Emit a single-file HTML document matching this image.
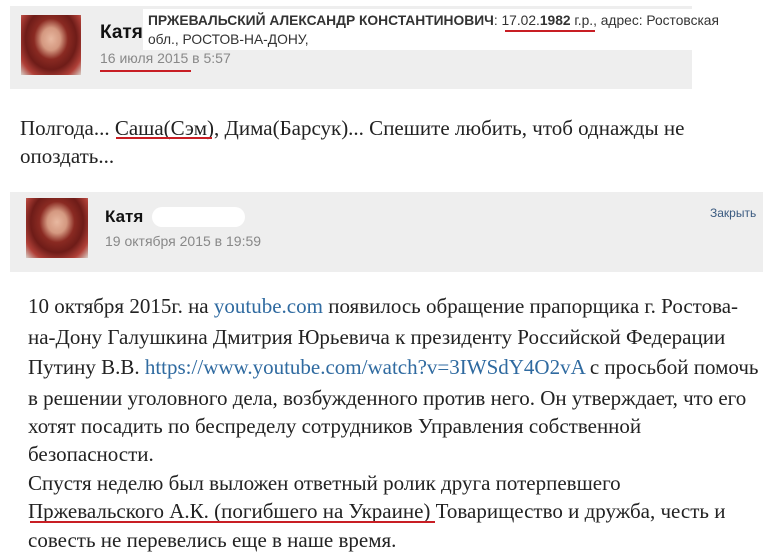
<!DOCTYPE html>
<html><head><meta charset="utf-8"><style>
body{margin:0;width:763px;height:559px;background:#fff;position:relative;overflow:hidden;font-family:"Liberation Sans",sans-serif}
.a{position:absolute}
.grey{background:#eeeeee}
.av{background:radial-gradient(ellipse at 50% 40%,#e8b8a0 0,#d49880 22%,#8a2a22 40%,#6e1c18 60%,#b04038 80%,#d8d0c8 100%)}
.ser{font-family:"Liberation Serif",serif;font-size:21px;color:#222;white-space:nowrap;position:absolute;left:28px;line-height:24px}
.red{position:absolute;height:2px;background:#c81e24}
a{color:#2f6aa0;text-decoration:none}
</style></head><body>
<div class="a grey" style="left:10px;top:6px;width:682px;height:83px"></div>
<div class="a av" style="left:21px;top:15px;width:60px;height:60px"></div>
<div class="a" style="left:100px;top:22px;font-size:19px;font-weight:bold;color:#111">Катя</div>
<div class="a" style="left:100px;top:50px;font-size:14px;color:#888">16 июля 2015 в 5:57</div>
<div class="red" style="left:100px;top:70px;width:91px"></div>
<div class="a" style="left:143px;top:9px;width:595px;height:41px;background:#fff"></div>
<div class="a" style="left:148px;top:11px;font-size:13.8px;color:#333;line-height:19px;width:590px;white-space:nowrap">
<b>ПРЖЕВАЛЬСКИЙ АЛЕКСАНДР КОНСТАНТИНОВИЧ</b>: 17.02.<b>1982</b> г.р., адрес: Ростовская<br>обл., РОСТОВ-НА-ДОНУ,</div>
<div class="red" style="left:505px;top:30px;width:90px"></div>

<div class="ser" style="left:20px;top:116px">Полгода... Саша(Сэм), Дима(Барсук)... Спешите любить, чтоб однажды не</div>
<div class="ser" style="left:20px;top:144px">опоздать...</div>
<div class="red" style="left:116px;top:137px;width:96px"></div>

<div class="a grey" style="left:10px;top:192px;width:753px;height:80px"></div>
<div class="a av" style="left:26px;top:198px;width:62px;height:60px"></div>
<div class="a" style="left:105px;top:207px;font-size:17px;font-weight:bold;color:#111">Катя</div>
<div class="a" style="left:152px;top:207px;width:93px;height:20px;border-radius:10px;background:#fff"></div>
<div class="a" style="left:105px;top:233px;font-size:14px;color:#888">19 октября 2015 в 19:59</div>
<div class="a" style="left:710px;top:206px;font-size:12px;color:#3a5a80">Закрыть</div>

<div class="ser" style="top:294px">10 октября 2015г. на <a>youtube.com</a> появилось обращение прапорщика г. Ростова-</div>
<div class="ser" style="top:325px">на-Дону Галушкина Дмитрия Юрьевича к президенту Российской Федерации</div>
<div class="ser" style="top:355px">Путину В.В. <a>https://www.youtube.com/watch?v=3IWSdY4O2vA</a> с просьбой помочь</div>
<div class="ser" style="top:386px">в решении уголовного дела, возбужденного против него. Он утверждает, что его</div>
<div class="ser" style="top:414px">хотят посадить по беспределу сотрудников Управления собственной</div>
<div class="ser" style="top:442px">безопасности.</div>
<div class="ser" style="top:471px">Спустя неделю был выложен ответный ролик друга потерпевшего</div>
<div class="ser" style="top:499px">Пржевальского А.К. (погибшего на Украине) Товарищество и дружба, честь и</div>
<div class="red" style="left:30px;top:521px;width:405px"></div>
<div class="ser" style="top:528px">совесть не перевелись еще в наше время.</div>
</body></html>
